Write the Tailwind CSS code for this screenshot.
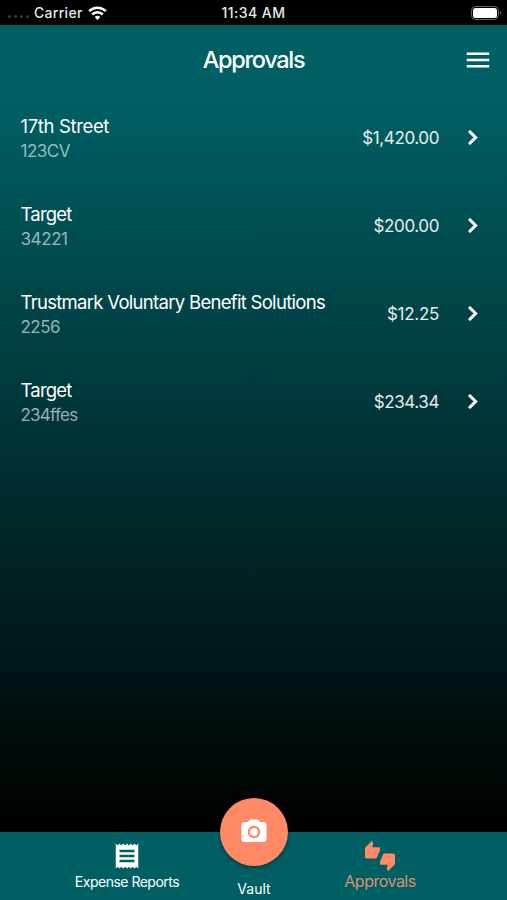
<!DOCTYPE html>
<html lang="en">
<head>
<meta charset="utf-8">
<title>Approvals</title>
<script src="https://cdn.jsdelivr.net/npm/@tailwindcss/browser@4"></script>
</head>
<body class="bg-black">
<div class="w-[507px] h-[900px] flex flex-col overflow-hidden text-white font-['Inter','Liberation_Sans',sans-serif] bg-[linear-gradient(to_bottom,#005f63_100px,#000000_830px)]">
  <div class="h-[25px] shrink-0 bg-black grid grid-cols-3 items-center text-[14px] font-medium text-[#e8e8e8]">
    <div class="flex items-center pl-2">
      <div class="flex gap-[3px] mt-2 mr-[5px]">
        <span class="size-[3px] rounded-full bg-[#3c3c3c]"></span><span class="size-[3px] rounded-full bg-[#3c3c3c]"></span><span class="size-[3px] rounded-full bg-[#3c3c3c]"></span><span class="size-[3px] rounded-full bg-[#3c3c3c]"></span>
      </div>
      <span class="tracking-[0.3px]">Carrier</span>
      <svg class="ml-[5px] w-[19px] h-[14px]" viewBox="0 0 19 14" fill="none" stroke="#fff" stroke-width="2.5"><path d="M1.1 5.2a12 12 0 0 1 16.8 0M4.2 8.5a7.5 7.5 0 0 1 10.6 0"/><path d="M9.5 14L6.7 11.1a4 4 0 0 1 5.6 0z" fill="#fff" stroke="none"/></svg>
    </div>
    <div class="text-center tracking-[0.45px]">11:34 AM</div>
    <div class="flex justify-end items-center pr-[6px]">
      <div class="w-[28px] h-[14px] rounded-[4.5px] border border-[#666] p-[1px]"><div class="size-full rounded-[2.5px] bg-white"></div></div>
      <div class="w-[1.5px] h-[4px] ml-px rounded-r-full bg-[#666]"></div>
    </div>
  </div>
  <header class="h-[69px] shrink-0 grid grid-cols-[1fr_auto_1fr] items-center pr-[14px] pl-[14px]">
    <span></span>
    <h1 class="text-[23.5px] font-medium tracking-[-1.3px]">Approvals</h1>
    <svg class="size-[30px] justify-self-end" viewBox="0 0 24 24" fill="#fff"><path d="M3 18h18v-2H3v2zm0-5h18v-2H3v2zm0-7v2h18V6H3z"/></svg>
  </header>
  <main class="flex-1 flex flex-col">
    <div class="h-[88px] flex items-center pl-[20.5px] pr-[20px]">
      <div class="flex-1 pt-[1px]"><div class="text-[18.5px] leading-[25px] tracking-[-0.35px]">17th Street</div><div class="text-[17px] leading-[25px] tracking-[-0.5px] text-white/60">123CV</div></div>
      <div class="text-[17px] tracking-[-0.4px] text-white/90 pt-[2px]">$1,420.00</div>
      <svg class="ml-[19px] mb-px size-[29px]" viewBox="0 0 24 24" fill="#fff" stroke="#fff" stroke-width=".6"><path d="M10 6L8.59 7.41 13.17 12l-4.58 4.59L10 18l6-6z"/></svg>
    </div>
    <div class="h-[88px] flex items-center pl-[20.5px] pr-[20px]">
      <div class="flex-1 pt-[1px]"><div class="text-[18.5px] leading-[25px] tracking-[-0.8px]">Target</div><div class="text-[17px] leading-[25px] tracking-[-0.4px] text-white/60">34221</div></div>
      <div class="text-[17px] tracking-[-0.4px] text-white/90 pt-[2px]">$200.00</div>
      <svg class="ml-[19px] mb-px size-[29px]" viewBox="0 0 24 24" fill="#fff" stroke="#fff" stroke-width=".6"><path d="M10 6L8.59 7.41 13.17 12l-4.58 4.59L10 18l6-6z"/></svg>
    </div>
    <div class="h-[88px] flex items-center pl-[20.5px] pr-[20px]">
      <div class="flex-1 pt-[1px]"><div class="text-[18.5px] leading-[25px] tracking-[-0.7px]">Trustmark Voluntary Benefit Solutions</div><div class="text-[17px] leading-[25px] tracking-[-0.5px] text-white/60">2256</div></div>
      <div class="text-[17px] tracking-[-0.3px] text-white/90 pt-[2px]">$12.25</div>
      <svg class="ml-[19px] mb-px size-[29px]" viewBox="0 0 24 24" fill="#fff" stroke="#fff" stroke-width=".6"><path d="M10 6L8.59 7.41 13.17 12l-4.58 4.59L10 18l6-6z"/></svg>
    </div>
    <div class="h-[88px] flex items-center pl-[20.5px] pr-[20px]">
      <div class="flex-1 pt-[1px]"><div class="text-[18.5px] leading-[25px] tracking-[-0.8px]">Target</div><div class="text-[17px] leading-[25px] tracking-[-0.75px] text-white/60">234ffes</div></div>
      <div class="text-[17px] tracking-[-0.4px] text-white/90 pt-[2px]">$234.34</div>
      <svg class="ml-[19px] mb-px size-[29px]" viewBox="0 0 24 24" fill="#fff" stroke="#fff" stroke-width=".6"><path d="M10 6L8.59 7.41 13.17 12l-4.58 4.59L10 18l6-6z"/></svg>
    </div>
  </main>
  <nav class="h-[68px] shrink-0 bg-[#005f63] grid grid-cols-[254px_126px_127px] relative">
    <div class="w-[254px] flex flex-col items-center pt-[9px]">
      <svg class="size-[30px]" viewBox="0 0 24 24" fill="#fff"><path d="M18 17H6v-2h12v2zm0-4H6v-2h12v2zm0-4H6V7h12v2zM3 22l1.5-1.5L6 22l1.5-1.5L9 22l1.5-1.5L12 22l1.5-1.5L15 22l1.5-1.5L18 22l1.5-1.5L21 22V2l-1.5 1.5L18 2l-1.5 1.5L15 2l-1.5 1.5L12 2l-1.5 1.5L9 2 7.5 3.5 6 2 4.5 3.5 3 2v20z"/></svg>
      <span class="text-[14px] leading-[20px] tracking-[-0.5px] pt-px">Expense Reports</span>
    </div>
    <div class="absolute left-[220px] top-[-34px] w-[68px] flex flex-col items-center">
      <div class="size-[68px] rounded-full bg-[#ff8a65] shadow-[0_2px_4px_rgba(0,0,0,0.35)] flex items-center justify-center">
        <svg class="size-[30px]" viewBox="0 0 24 24" fill="#fff"><circle cx="12" cy="12" r="3.2"/><path d="M9 2L7.17 4H4c-1.1 0-2 .9-2 2v12c0 1.1.9 2 2 2h16c1.1 0 2-.9 2-2V6c0-1.1-.9-2-2-2h-3.17L15 2H9zm3 15c-2.76 0-5-2.24-5-5s2.24-5 5-5 5 2.24 5 5-2.24 5-5 5z"/></svg>
      </div>
      <span class="mt-[13px] text-[14px] leading-[20px]">Vault</span>
    </div>
    <div class="w-[252px] flex flex-col items-center pt-[9px] text-[#ff8a65]">
      <svg class="size-[30px]" viewBox="0 0 24 24" fill="currentColor"><path d="M12 6c0-.55-.45-1-1-1H5.82l.66-3.18.02-.23c0-.31-.13-.59-.33-.8L5.38 0 .44 4.94C.17 5.21 0 5.59 0 6v6.5c0 .83.67 1.5 1.5 1.5h6.75c.62 0 1.15-.38 1.38-.91l2.26-5.29c.07-.17.11-.36.11-.55V6zm10.5 4h-6.75c-.62 0-1.15.38-1.38.91l-2.26 5.29c-.07.17-.11.36-.11.55V18c0 .55.45 1 1 1h5.18l-.66 3.18-.02.24c0 .31.13.59.33.8l.79.78 4.94-4.94c.27-.27.44-.65.44-1.06v-6.5c0-.83-.67-1.5-1.5-1.5z"/></svg>
      <span class="text-[16px] leading-[20px] tracking-[-0.5px] text-[#d8926f]">Approvals</span>
    </div>
  </nav>
</div>
</body>
</html>
